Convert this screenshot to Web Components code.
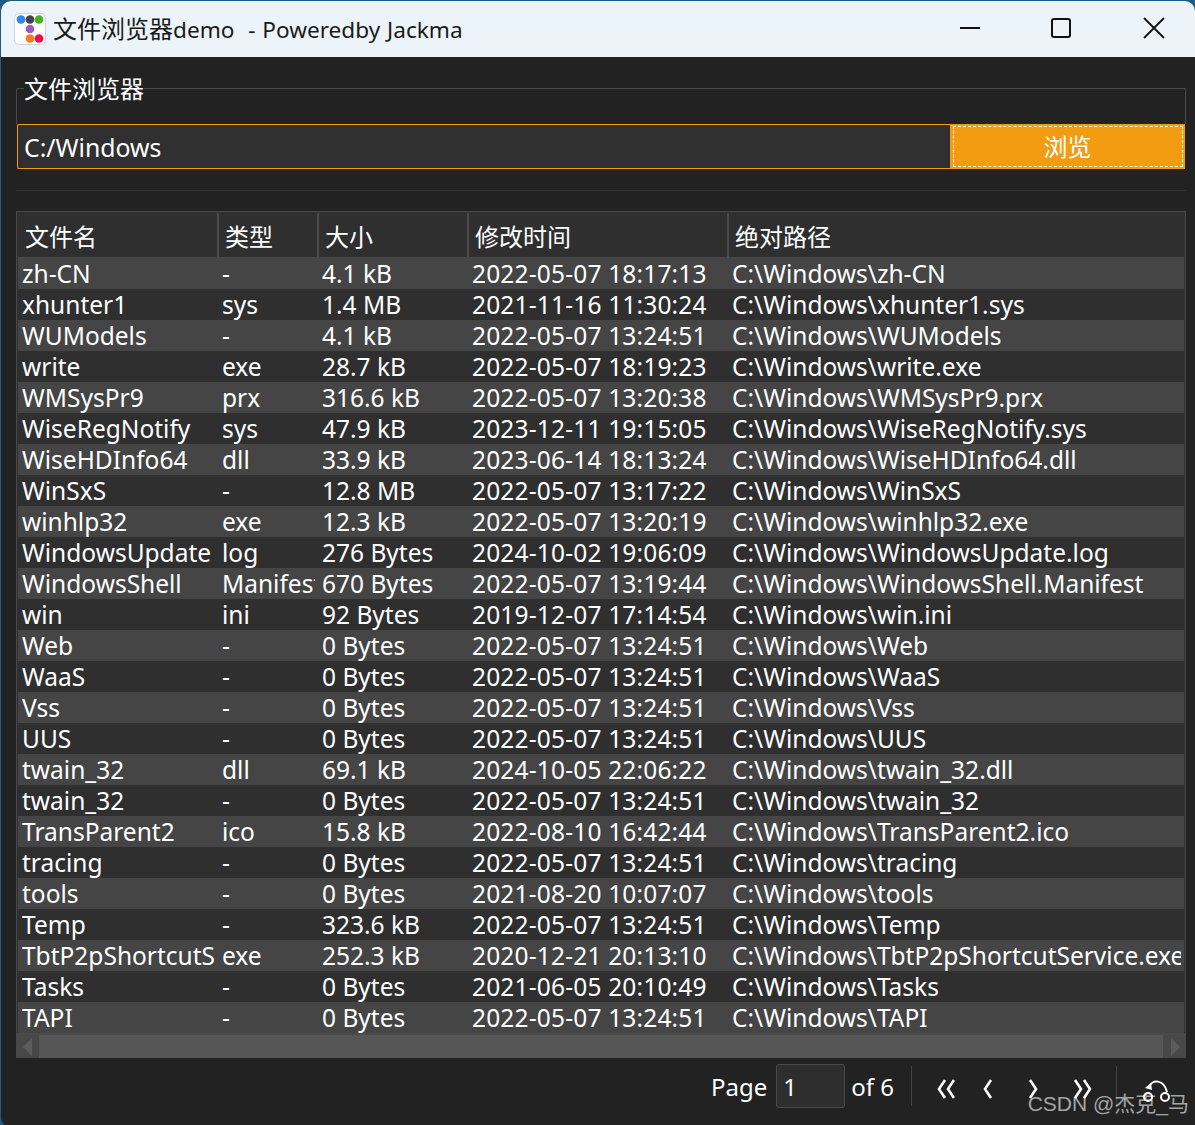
<!DOCTYPE html>
<html>
<head>
<meta charset="utf-8">
<title>文件浏览器demo</title>
<style>
  html, body { margin: 0; height: 100%; background: #1b5c86; overflow: hidden; }
  body { font: 24px "Noto Sans", "Noto Sans CJK SC", sans-serif; color: #fff; }
</style>
</head>
<body>
<app-window>
  <title-bar slot="title"><b>文件浏览器</b>demo &nbsp;- Poweredby Jackma</title-bar>
  <group-box label="文件浏览器"><path-picker value="C:/Windows" action="浏览"></path-picker></group-box>
  <file-table></file-table>
  <page-bar page="1" total="6"></page-bar>
  <water-mark>CSDN @杰克_马</water-mark>
</app-window>

<script>
const FONT = `"Noto Sans", "Noto Sans CJK SC", sans-serif`;

const FILES = [
  ['zh-CN', '-', '4.1 kB', '2022-05-07 18:17:13', 'C:\\Windows\\zh-CN'],
  ['xhunter1', 'sys', '1.4 MB', '2021-11-16 11:30:24', 'C:\\Windows\\xhunter1.sys'],
  ['WUModels', '-', '4.1 kB', '2022-05-07 13:24:51', 'C:\\Windows\\WUModels'],
  ['write', 'exe', '28.7 kB', '2022-05-07 18:19:23', 'C:\\Windows\\write.exe'],
  ['WMSysPr9', 'prx', '316.6 kB', '2022-05-07 13:20:38', 'C:\\Windows\\WMSysPr9.prx'],
  ['WiseRegNotify', 'sys', '47.9 kB', '2023-12-11 19:15:05', 'C:\\Windows\\WiseRegNotify.sys'],
  ['WiseHDInfo64', 'dll', '33.9 kB', '2023-06-14 18:13:24', 'C:\\Windows\\WiseHDInfo64.dll'],
  ['WinSxS', '-', '12.8 MB', '2022-05-07 13:17:22', 'C:\\Windows\\WinSxS'],
  ['winhlp32', 'exe', '12.3 kB', '2022-05-07 13:20:19', 'C:\\Windows\\winhlp32.exe'],
  ['WindowsUpdate', 'log', '276 Bytes', '2024-10-02 19:06:09', 'C:\\Windows\\WindowsUpdate.log'],
  ['WindowsShell', 'Manifest', '670 Bytes', '2022-05-07 13:19:44', 'C:\\Windows\\WindowsShell.Manifest'],
  ['win', 'ini', '92 Bytes', '2019-12-07 17:14:54', 'C:\\Windows\\win.ini'],
  ['Web', '-', '0 Bytes', '2022-05-07 13:24:51', 'C:\\Windows\\Web'],
  ['WaaS', '-', '0 Bytes', '2022-05-07 13:24:51', 'C:\\Windows\\WaaS'],
  ['Vss', '-', '0 Bytes', '2022-05-07 13:24:51', 'C:\\Windows\\Vss'],
  ['UUS', '-', '0 Bytes', '2022-05-07 13:24:51', 'C:\\Windows\\UUS'],
  ['twain_32', 'dll', '69.1 kB', '2024-10-05 22:06:22', 'C:\\Windows\\twain_32.dll'],
  ['twain_32', '-', '0 Bytes', '2022-05-07 13:24:51', 'C:\\Windows\\twain_32'],
  ['TransParent2', 'ico', '15.8 kB', '2022-08-10 16:42:44', 'C:\\Windows\\TransParent2.ico'],
  ['tracing', '-', '0 Bytes', '2022-05-07 13:24:51', 'C:\\Windows\\tracing'],
  ['tools', '-', '0 Bytes', '2021-08-20 10:07:07', 'C:\\Windows\\tools'],
  ['Temp', '-', '323.6 kB', '2022-05-07 13:24:51', 'C:\\Windows\\Temp'],
  ['TbtP2pShortcutService', 'exe', '252.3 kB', '2020-12-21 20:13:10', 'C:\\Windows\\TbtP2pShortcutService.exe'],
  ['Tasks', '-', '0 Bytes', '2021-06-05 20:10:49', 'C:\\Windows\\Tasks'],
  ['TAPI', '-', '0 Bytes', '2022-05-07 13:24:51', 'C:\\Windows\\TAPI'],
];

// the three cells the real table elides by running out of column
const isLong = (c) => c === 'Manifest' || c === 'TbtP2pShortcutService' || c.endsWith('ShortcutService.exe');

class AppWindow extends HTMLElement {
  constructor() {
    super();
    this.attachShadow({ mode: 'open' }).innerHTML = `
      <style>
        :host {
          display: block;
          position: relative;
          box-sizing: border-box;
          height: 1125px;
          margin-top: 1px;
          margin-left: 1px;
          border-radius: 10px 10px 0 8px;
          overflow: hidden;
          background: #222;
          font-family: ${FONT};
          font-size: 24px;
          color: #fff;
        }
        #body { padding: 31px 9px 0 15px; }
      </style>
      <slot name="title"></slot>
      <div id="body"><slot></slot></div>
    `;
  }
}

class TitleBar extends HTMLElement {
  constructor() {
    super();
    this.attachShadow({ mode: 'open' }).innerHTML = `
      <style>
        :host {
          display: flex;
          align-items: center;
          height: 56px;
          padding-left: 13px;
          background: #ecf4f9;
          color: #1a1a1a;
          font-size: 22.6px;
          word-spacing: 1px;
          line-height: 1;
        }
        ::slotted(b) { font-weight: 400; font-size: 24px; }
        #icon { width: 32px; height: 32px; margin-right: 7px; flex: none; }
        #text { flex: 1; white-space: nowrap; }
        #buttons { display: flex; flex: none; }
        #buttons svg { height: 40px; flex: none; fill: none; stroke: #111; stroke-width: 2; }
      </style>
      <svg id="icon" viewBox="0 0 32 32">
        <rect x=".5" y=".5" width="31" height="31" rx="4" fill="#fff" stroke="#cfd3d6"/>
        <circle cx="7" cy="6.5" r="4.3" fill="#2f86ee"/>
        <circle cx="16" cy="6.5" r="4.3" fill="#444"/>
        <circle cx="25" cy="6.5" r="4.3" fill="#41b51f"/>
        <circle cx="16" cy="16" r="4.3" fill="#9a5cc0"/>
        <circle cx="16" cy="25.5" r="4.3" fill="#f57c1c"/>
        <circle cx="25" cy="25.5" r="4.3" fill="#f5064c"/>
      </svg>
      <span id="text"><slot></slot></span>
      <div id="buttons">
        <svg width="93" viewBox="0 0 93 40"><path d="M38 19h20"/></svg>
        <svg width="93" viewBox="0 0 93 40"><rect x="37" y="10" width="18" height="18" rx="2"/></svg>
        <svg width="87" viewBox="0 0 87 40"><path d="M36 9l20 20M56 9L36 29" stroke-width="1.8"/></svg>
      </div>
    `;
  }
}

class GroupBox extends HTMLElement {
  constructor() {
    super();
    this.attachShadow({ mode: 'open' }).innerHTML = `
      <style>
        :host {
          display: block;
          box-sizing: border-box;
          height: 103px;
          border-bottom: 1px solid #303030;
        }
        #frame {
          position: relative;
          box-sizing: border-box;
          height: 36px;
          border: 1px solid #4a4a4a;
          border-bottom: 0;
          border-radius: 2px 2px 0 0;
        }
        #legend {
          position: absolute;
          left: 7px;
          top: -15px;
          height: 30px;
          line-height: 30px;
          font-size: 24px;
          white-space: nowrap;
          background: linear-gradient(transparent 13px, #222 13px, #222 17px, transparent 17px);
        }
        #content { padding: 0 1px; }
      </style>
      <div id="frame"><div id="legend"></div></div>
      <div id="content"><slot></slot></div>
    `;
    this.shadowRoot.querySelector('#legend').textContent = this.getAttribute('label');
  }
}

class PathPicker extends HTMLElement {
  constructor() {
    super();
    this.attachShadow({ mode: 'open' }).innerHTML = `
      <style>
        :host { display: flex; height: 45px; }
        #value {
          flex: 1;
          box-sizing: border-box;
          padding-left: 6px;
          background: #303030;
          border: 1px solid #f39c12;
          border-right: 0;
          border-radius: 2px 0 0 2px;
          font-size: 24.8px;
          line-height: 44px;
          white-space: nowrap;
        }
        #action {
          box-sizing: border-box;
          flex: none;
          width: 235px;
          position: relative;
          background: #f39c12;
          border: 2px solid #f39c12;
          text-align: center;
          line-height: 41px;
        }
        #action::after {
          content: "";
          position: absolute;
          inset: 0 0 0 1px;
          border: 1px dashed #fff;
        }
      </style>
      <div id="value"></div>
      <div id="action"></div>
    `;
    this.shadowRoot.querySelector('#value').textContent = this.getAttribute('value');
    this.shadowRoot.querySelector('#action').textContent = this.getAttribute('action');
  }
}

class FileTable extends HTMLElement {
  constructor() {
    super();
    const rows = FILES.map((row, i) => `
      <div class="row ${i % 2 ? '' : 'alt'}">${row.map(c => `<span${isLong(c) ? ' class="long"' : ''}>${c}</span>`).join('')}</div>
    `).join('');
    this.attachShadow({ mode: 'open' }).innerHTML = `
      <style>
        :host {
          display: block;
          margin-top: 20px;
          box-sizing: border-box;
          border: 1px solid #4a4a4a;
          border-bottom: 0;
          background: #2f2f2f;
        }
        #list { padding: 1px 1px 0 1px; }
        .head, .row { display: grid; }
        .head {
          grid-template-columns: 201px 100px 150px 260px 1fr;
          height: 44px;
          border-bottom: 1px solid #4a4a4a;
          line-height: 47px;
        }
        .head span {
          padding-left: 6px;
          border-right: 2px solid #4a4a4a;
          white-space: nowrap;
          box-sizing: border-box;
        }
        .head span:first-child { padding-left: 7px; }
        .head span:last-child { border-right: 0; }
        .row {
          grid-template-columns: 200px 100px 150px 260px 1fr;
          height: 31px;
          font-size: 24.5px;
          line-height: 32px;
        }
        .row.alt { background: #454545; }
        .row span {
          margin: 0 3px 0 4px;
          min-width: 0;
          white-space: nowrap;
        }
        .row span.long { overflow-x: clip; overflow-y: visible; }
        .row span:nth-child(4) { letter-spacing: .17px; }
        #scroll {
          display: flex;
          justify-content: space-between;
          height: 23px;
          margin: 0 -1px;
          border-top: 2px solid #4a4a4a;
          background: #565656;
        }
        #scroll div { width: 23px; background: #484848; display: flex; align-items: center; justify-content: center; }
        #scroll svg { width: 10px; height: 18px; }
      </style>
      <div id="list">
        <div class="head"><span>文件名</span><span>类型</span><span>大小</span><span>修改时间</span><span>绝对路径</span></div>
        ${rows}
      </div>
      <div id="scroll">
        <div><svg viewBox="0 0 10 18"><path d="M9 0v18L0 9z" fill="#5c5c5c"/></svg></div>
        <div><svg viewBox="0 0 10 18"><path d="M1 0v18l9-9z" fill="#5c5c5c"/></svg></div>
      </div>
    `;
  }
}

class PageBar extends HTMLElement {
  constructor() {
    super();
    this.attachShadow({ mode: 'open' }).innerHTML = `
      <style>
        :host {
          display: flex;
          align-items: center;
          justify-content: flex-end;
          height: 44px;
          margin-top: 6px;
          line-height: 1;
        }
        span { padding-top: 2px; }
        #page {
          box-sizing: border-box;
          width: 69px;
          height: 44px;
          margin: 0 6px 0 9px;
          padding-left: 6px;
          line-height: 44px;
          background: #2e2e2e;
          border: 1px solid #4a4a4a;
          border-radius: 3px;
        }
        .sep { width: 1px; height: 40px; background: #444; flex: none; }
        svg { flex: none; stroke: #fff; fill: none; }
        .nav { height: 20px; margin-top: 6px; stroke-width: 2.6; }
      </style>
      <span>Page</span>
      <div id="page">${this.getAttribute('page')}</div>
      <span>of ${this.getAttribute('total')}</span>
      <div class="sep" style="margin:0 25px 0 17px"></div>
      <svg class="nav" width="18" viewBox="0 0 18 20"><path d="M8 1L2 10l6 9M17 1l-6 9 6 9"/></svg>
      <svg class="nav" width="11" viewBox="0 0 11 20" style="margin-left:27px"><path d="M9 1l-6 9 6 9"/></svg>
      <svg class="nav" width="10" viewBox="0 0 10 20" style="margin-left:35px"><path d="M2 1l6 9-6 9"/></svg>
      <svg class="nav" width="19" viewBox="0 0 19 20" style="margin-left:35px"><path d="M2 1l6 9-6 9M11 1l6 9-6 9"/></svg>
      <div class="sep" style="margin:0 25px 0 24px"></div>
      <svg width="31" height="24" viewBox="0 0 31 24" style="margin:10px 13px 0 0" stroke-width="2">
        <path d="M7 8C10 0 22 0 25 13"/>
        <path d="M3 9l6-5 1 7z" fill="#fff" stroke="none"/>
        <circle cx="6" cy="18" r="4"/>
        <circle cx="23" cy="18" r="4"/>
      </svg>
    `;
  }
}

class WaterMark extends HTMLElement {
  constructor() {
    super();
    this.attachShadow({ mode: 'open' }).innerHTML = `
      <style>
        :host {
          position: absolute;
          right: 6px;
          top: 1088px;
          font-family: "Liberation Sans", "Noto Sans CJK SC", sans-serif;
          font-size: 21px;
          line-height: 30px;
          color: rgba(255, 255, 255, .6);
          white-space: nowrap;
        }
      </style>
      <slot></slot>
    `;
  }
}

customElements.define('app-window', AppWindow);
customElements.define('title-bar', TitleBar);
customElements.define('group-box', GroupBox);
customElements.define('path-picker', PathPicker);
customElements.define('file-table', FileTable);
customElements.define('page-bar', PageBar);
customElements.define('water-mark', WaterMark);
</script>
</body>
</html>
